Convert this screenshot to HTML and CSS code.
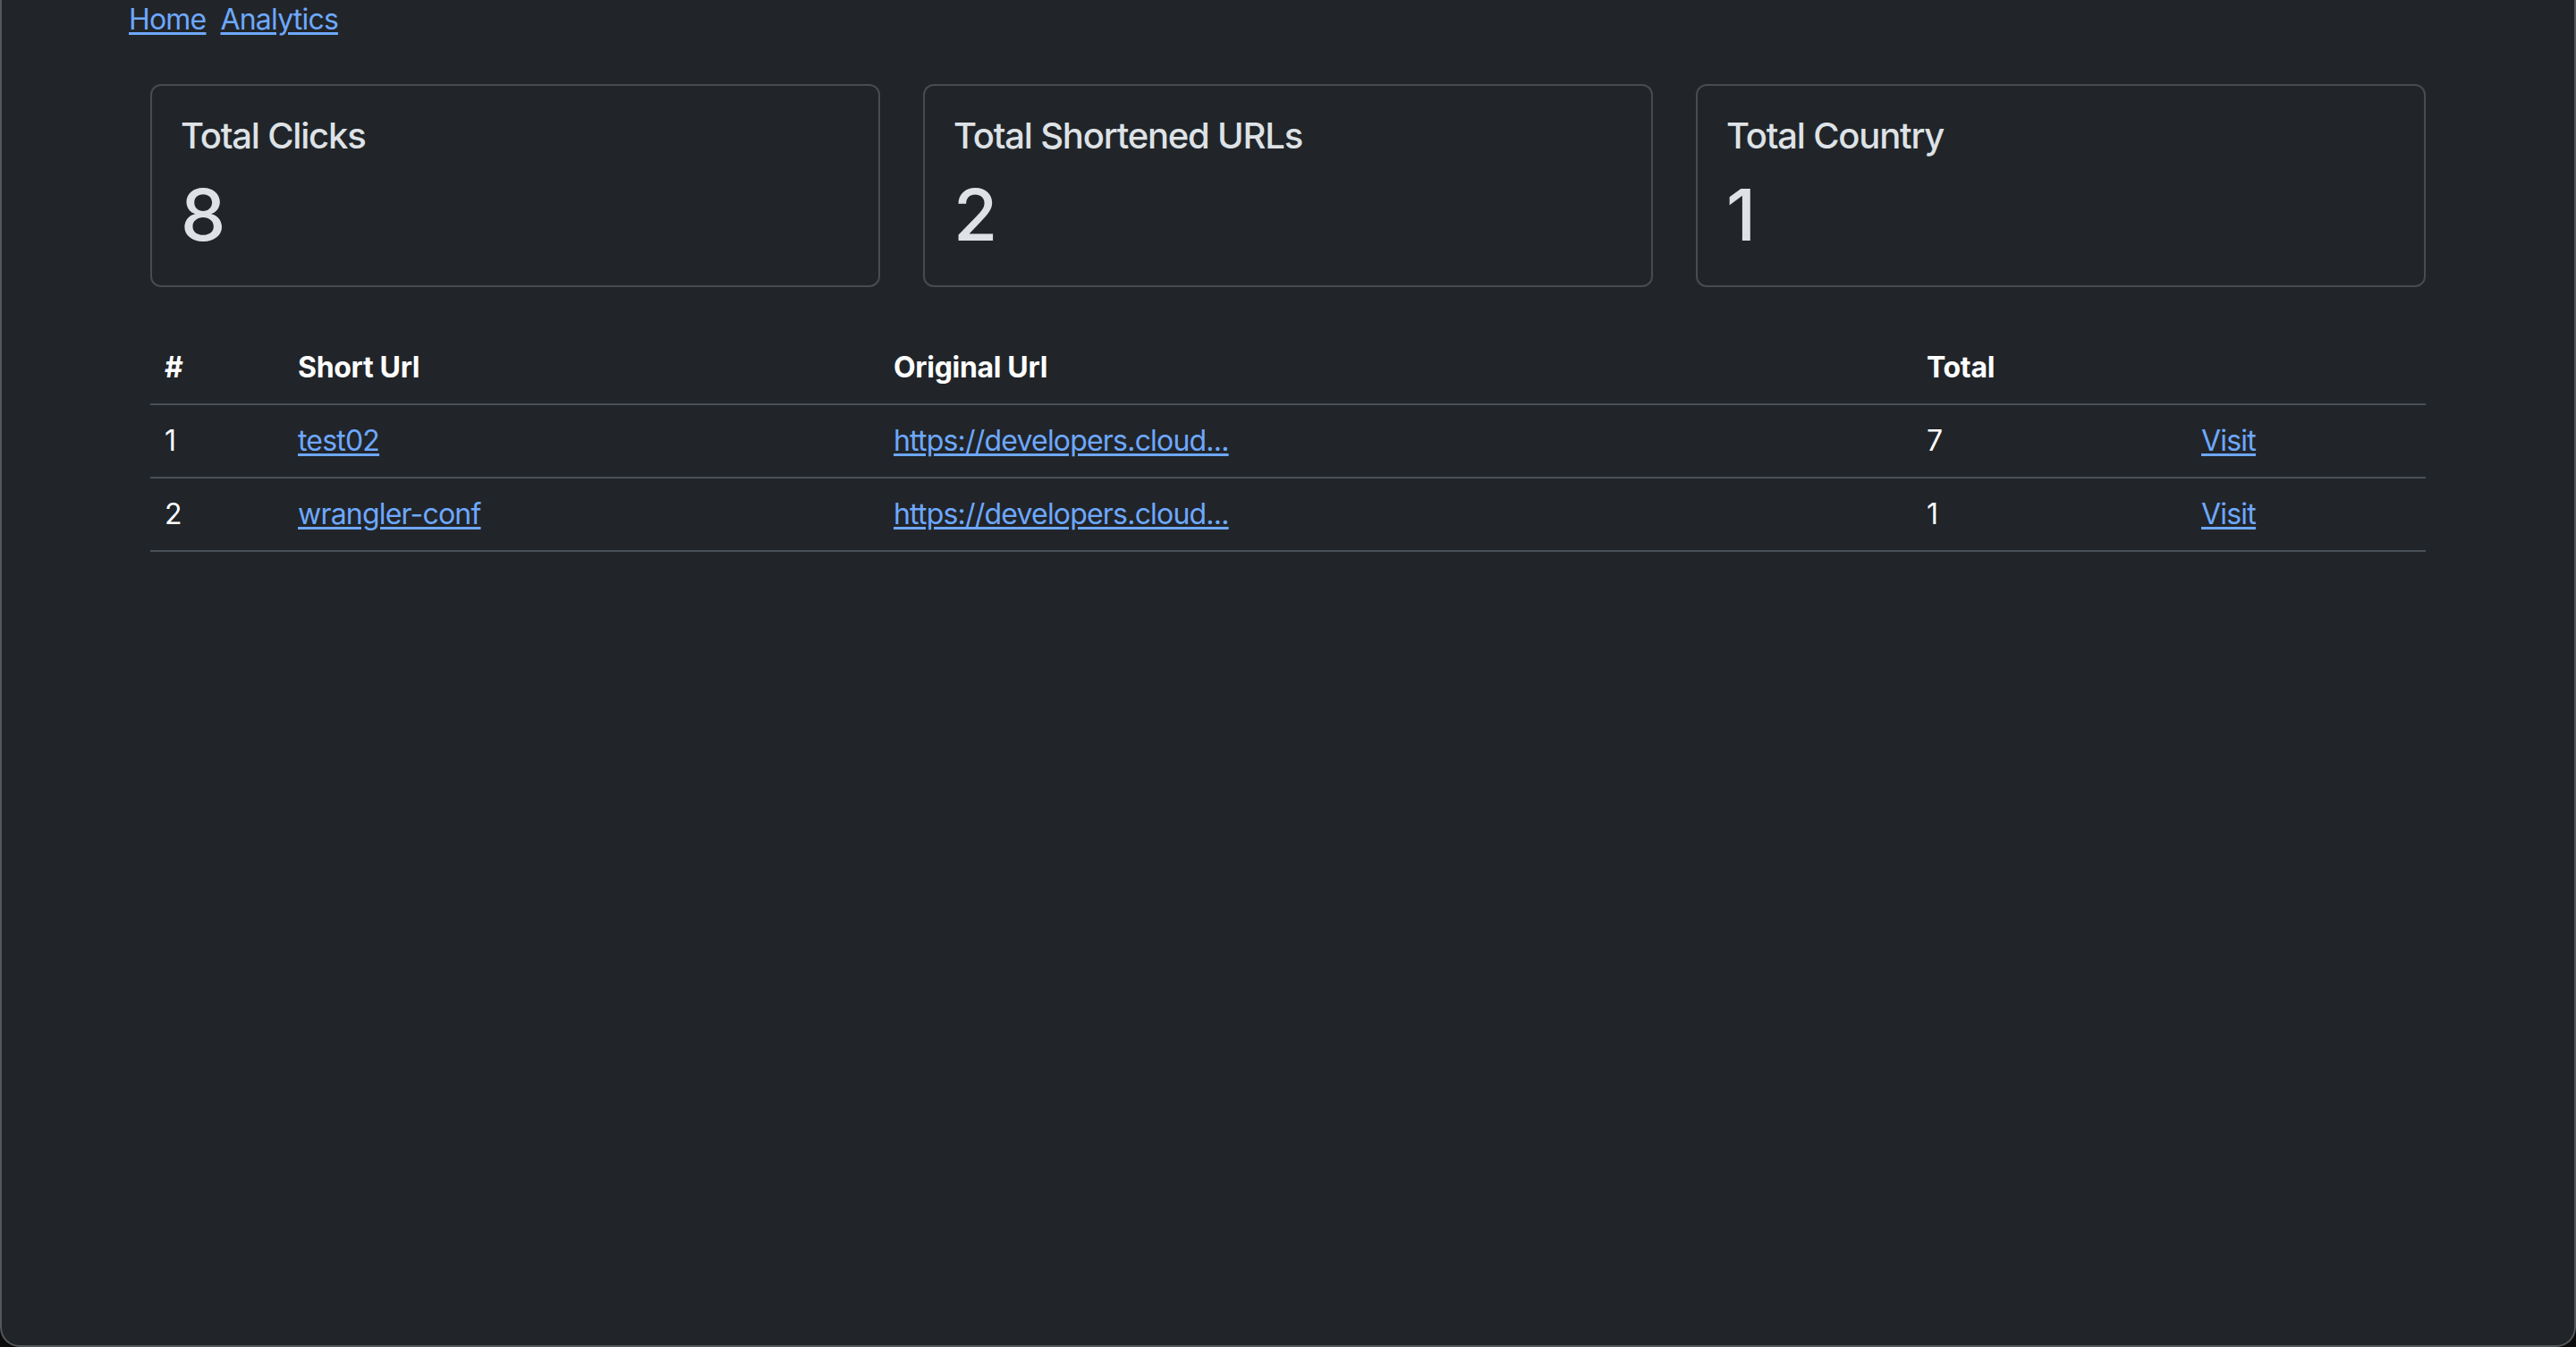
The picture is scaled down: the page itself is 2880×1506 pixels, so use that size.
FILE: index.html
```html
<!DOCTYPE html>
<html lang="en">
<head>
<meta charset="utf-8">
<title>Analytics</title>
<link rel="stylesheet" href="styles.css">
</head>
<body>
<div class="window">
  <div class="container">
    <nav class="nav">
      <a href="#">Home</a>
      <a href="#">Analytics</a>
    </nav>
    <main class="content">
      <section class="stats">
        <div class="card">
          <h5 class="card-title">Total Clicks</h5>
          <p class="card-num">8</p>
        </div>
        <div class="card">
          <h5 class="card-title">Total Shortened URLs</h5>
          <p class="card-num">2</p>
        </div>
        <div class="card">
          <h5 class="card-title">Total Country</h5>
          <p class="card-num">1</p>
        </div>
      </section>
      <table class="table">
        <colgroup>
          <col class="c1"><col class="c2"><col class="c3"><col class="c4"><col class="c5">
        </colgroup>
        <thead>
          <tr><th>#</th><th>Short Url</th><th>Original Url</th><th>Total</th><th></th></tr>
        </thead>
        <tbody>
          <tr><td>1</td><td><a href="#">test02</a></td><td><a href="#">https://developers.cloud...</a></td><td>7</td><td><a href="#">Visit</a></td></tr>
          <tr><td>2</td><td><a href="#">wrangler-conf</a></td><td><a href="#">https://developers.cloud...</a></td><td>1</td><td><a href="#">Visit</a></td></tr>
        </tbody>
      </table>
    </main>
  </div>
</div>
</body>
</html>
```
FILE: styles.css
```css
* { box-sizing: border-box; }
html, body { margin: 0; padding: 0; background: #0b0b0b; }
body {
  font-family: Inter, "Noto Sans", "Liberation Sans", sans-serif;
  font-size: 32px;
  line-height: 48px;
  letter-spacing: -0.025em;
  color: #dee2e6;
}
.window {
  width: 2880px;
  height: 1506px;
  background: #212529;
  border: 2px solid #54575b;
  border-top: none;
  border-radius: 0 0 22px 22px;
  overflow: hidden;
}
.container {
  width: 2640px;
  margin: 0 auto;
  padding: 0 24px;
}
a { color: #6ea8fe; text-decoration: underline; text-underline-offset: 3px; }
.nav { display: flex; gap: 16px; margin-top: -2px; }
.content { padding: 0 24px; }
.stats {
  display: grid;
  grid-template-columns: repeat(3, 1fr);
  gap: 48px;
  margin-top: 48px;
}
.card {
  border: 2px solid #484b4f;
  border-radius: 12px;
  padding: 32px 32px 31px;
}
.card-title {
  margin: 0 0 16px;
  font-size: 40px;
  line-height: 48px;
  font-weight: 500;
  letter-spacing: -0.03em;
}
.card-num {
  margin: 0;
  font-size: 80px;
  line-height: 96px;
  font-weight: 500;
  letter-spacing: 0;
}
.table {
  width: 100%;
  margin-top: 50px;
  border-collapse: collapse;
  table-layout: fixed;
  color: #fff;
}
.c1 { width: 149px; }
.c2 { width: 666px; }
.c3 { width: 1155px; }
.c4 { width: 307px; }
.c5 { width: 267px; }
.table th, .table td {
  padding: 16px;
  text-align: left;
  border-bottom: 2px solid #495057;
  font-weight: 400;
}
.table th { font-weight: 700; letter-spacing: -0.01em; }
```
